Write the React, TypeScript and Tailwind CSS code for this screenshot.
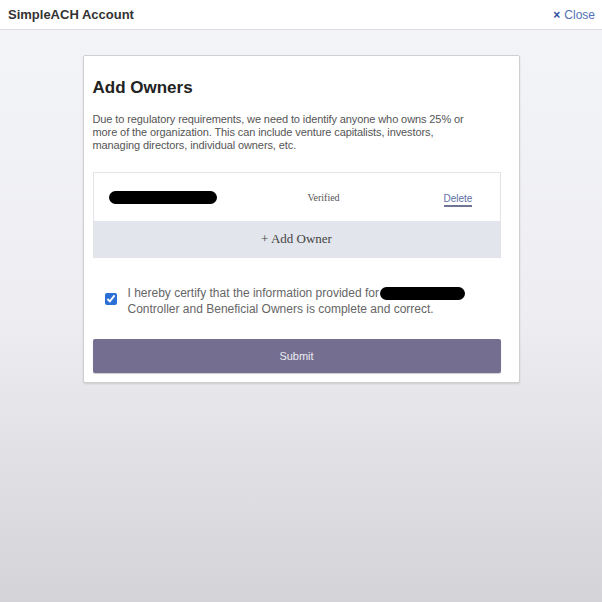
import React from 'react'

const App = () => {
  return (
    <div className="flex h-[602px] w-[602px] flex-col font-['Liberation_Sans',Arial,sans-serif]">
      {/* Header */}
      <div className="flex h-[30px] shrink-0 items-center justify-between border-b border-[#dcdcdf] bg-white pl-[8px] pr-[7px] shadow-[0_1px_2px_rgba(0,0,0,0.06)]">
        <span className="text-[13px] font-bold text-[#333]">SimpleACH Account</span>
        <span className="flex items-center gap-[4px] text-[12px] text-[#5470b8]">
          <span className="font-bold text-[#2f4f9f]">×</span>
          Close
        </span>
      </div>

      {/* Body */}
      <div className="flex-1 bg-gradient-to-b from-[#f3f4f8] via-[#eeeef2] to-[#d4d4d8] pt-[25px]">
        <div className="mx-auto w-[437px] rounded-[2px] border border-[#cfcfd2] bg-white pb-[9px] pl-[9px] pr-[18px] pt-[20px] shadow-[0_1px_2px_rgba(0,0,0,0.12)]">
          <h1 className="text-[17px] font-bold leading-[24px] text-[#222]">Add Owners</h1>
          <p className="mt-[13px] max-w-[384px] text-[11px] leading-[13px] tracking-[-0.1px] text-[#555]">
            Due to regulatory requirements, we need to identify anyone who owns 25% or more of the organization. This can include venture capitalists, investors, managing directors, individual owners, etc.
          </p>

          {/* Owners table */}
          <div className="mt-[20px] border border-[#e4e4e8]">
            <div className="flex h-[48px] items-center bg-white font-['Liberation_Serif',serif]">
              <div className="flex w-[190px] items-center pl-[15px]">
                <div className="h-[13px] w-[108px] rounded-full bg-black" />
              </div>
              <div className="w-[80px] text-center text-[10px] text-[#555]">Verified</div>
              <div className="ml-[80px] font-['Liberation_Sans',Arial,sans-serif]">
                <span className="border-b-2 border-[#6f7590] pb-[1px] text-[10px] text-[#5d6fa6]">Delete</span>
              </div>
            </div>
            <div className="flex h-[36px] items-center justify-center bg-[#e2e5eb] font-['Liberation_Serif',serif] text-[13px] text-[#444]">
              + Add Owner
            </div>
          </div>

          {/* Certification */}
          <div className="mt-[27px] flex items-start pl-[12px]">
            <input type="checkbox" defaultChecked className="mt-[8px] h-[12px] w-[12px] accent-[#2b6fd6]" />
            <p className="ml-[11px] text-[12px] leading-[16px] text-[#666]">
              <span className="inline-flex items-center">
                I hereby certify that the information provided for
                <span className="ml-[1px] inline-block h-[13px] w-[85px] rounded-full bg-black align-middle" />
              </span>
              <br />
              Controller and Beneficial Owners is complete and correct.
            </p>
          </div>

          <button className="mt-[22px] flex h-[34px] w-full items-center justify-center rounded-[2px] bg-[#746e90] text-[11px] text-[#ecebf2] shadow-[0_1px_1px_rgba(0,0,0,0.2)]">
            Submit
          </button>
        </div>
      </div>
    </div>
  )
}

export default App
